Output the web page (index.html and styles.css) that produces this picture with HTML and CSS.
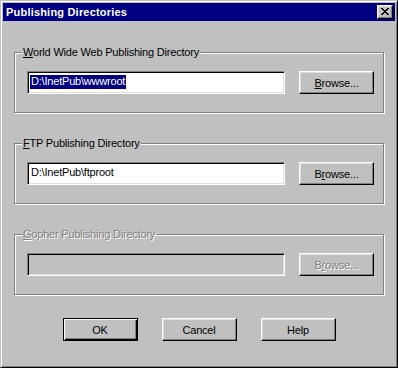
FILE: index.html
```html
<!DOCTYPE html>
<html lang="en">
<head>
  <meta charset="utf-8">
  <title>Publishing Directories</title>
  <link rel="stylesheet" href="styles.css">
</head>
<body>
  <div class="window">
    <div class="titlebar">
      <span class="title">Publishing Directories</span>
      <button class="close-btn" aria-label="Close">
        <svg width="8" height="7" viewBox="0 0 8 7" shape-rendering="crispEdges">
          <path d="M0 0h2v1H0z M6 0h2v1H6z M1 1h2v1H1z M5 1h2v1H5z M2 2h4v1H2z M3 3h2v1H3z M2 4h4v1H2z M1 5h2v1H1z M5 5h2v1H5z M0 6h2v1H0z M6 6h2v1H6z" fill="#000"/>
        </svg>
      </button>
    </div>

    <div class="client">
      <!-- WWW directory -->
      <div class="group">
        <span class="group-label"><u>W</u>orld Wide Web Publishing Directory</span>
        <div class="row">
          <div class="field"><span class="selected">D:\InetPub\wwwroot</span></div>
          <button class="btn"><u>B</u>rowse...</button>
        </div>
      </div>

      <!-- FTP directory -->
      <div class="group">
        <span class="group-label"><u>F</u>TP Publishing Directory</span>
        <div class="row">
          <div class="field"><span class="value">D:\InetPub\ftproot</span></div>
          <button class="btn">B<u>r</u>owse...</button>
        </div>
      </div>

      <!-- Gopher directory (disabled) -->
      <div class="group disabled">
        <span class="group-label"><u>G</u>opher Publishing Directory</span>
        <div class="row">
          <div class="field"></div>
          <button class="btn" disabled>B<u>r</u>owse...</button>
        </div>
      </div>

      <div class="actions">
        <button class="btn default">OK</button>
        <button class="btn">Cancel</button>
        <button class="btn">Help</button>
      </div>
    </div>
  </div>
</body>
</html>
```

FILE: styles.css
```css
body {
  margin: 0;
  background: #c0c0c0;
  font-family: "Liberation Sans", Arial, sans-serif;
  font-size: 11px;
  letter-spacing: -0.2px;
  color: #000;
}
.window {
  width: 398px;
  height: 368px;
  box-sizing: border-box;
  border: 1px solid;
  border-color: #c0c0c0 #000 #000 #c0c0c0;
  box-shadow: inset 1px 1px 0 #fff, inset -1px -1px 0 #808080;
  padding: 2px;
  background: #c0c0c0;
}
.titlebar {
  height: 18px;
  background: #000080;
  display: flex;
  align-items: center;
  justify-content: space-between;
  padding: 0 2px 0 3px;
}
.title {
  color: #fff;
  font-weight: bold;
  letter-spacing: 0.2px;
}
.close-btn {
  width: 16px;
  height: 14px;
  padding: 0 0 1px 0;
  box-sizing: border-box;
  display: flex;
  align-items: center;
  justify-content: center;
  background: #c0c0c0;
  border: 1px solid;
  border-color: #fff #000 #000 #fff;
  box-shadow: inset -1px -1px 0 #808080, inset 1px 1px 0 #dfdfdf;
}
.client {
  padding: 31px 11px 0;
}
.group {
  position: relative;
  height: 61px;
  box-sizing: border-box;
  border: 1px solid #808080;
  box-shadow: inset 1px 1px 0 #fff, 1px 1px 0 #fff;
  padding: 18px 0 0 12px;
}
.group + .group {
  margin-top: 30px;
}
.group-label {
  position: absolute;
  top: -7px;
  left: 7px;
  padding: 0 1px;
  line-height: 13px;
  background: #c0c0c0;
}
.row {
  display: flex;
  gap: 14px;
}
.field {
  width: 258px;
  height: 23px;
  box-sizing: border-box;
  border: 1px solid;
  border-color: #808080 #fff #fff #808080;
  box-shadow: inset 1px 1px 0 #000, inset -1px -1px 0 #dfdfdf;
  background: #fff;
  padding: 3px 2px 0;
  line-height: 13px;
  white-space: nowrap;
}
.selected {
  background: #000080;
  color: #fff;
  padding: 0 1px 2px;
}
.value {
  padding: 0 1px;
}
.btn {
  width: 75px;
  height: 23px;
  box-sizing: border-box;
  padding: 0;
  font: inherit;
  letter-spacing: inherit;
  color: #000;
  background: #c0c0c0;
  border: 1px solid;
  border-color: #fff #000 #000 #fff;
  box-shadow: inset -1px -1px 0 #808080, inset 1px 1px 0 #dfdfdf;
}
.btn.default {
  border-color: #000;
  box-shadow: inset 1px 1px 0 #fff, inset -1px -1px 0 #000, inset -2px -2px 0 #808080;
}
.btn:disabled {
  color: #808080;
  text-shadow: 1px 1px 0 #fff;
}
.disabled .group-label {
  color: #808080;
  text-shadow: 1px 1px 0 #fff;
}
.disabled .field {
  background: #c0c0c0;
}
.actions {
  display: flex;
  justify-content: center;
  gap: 24px;
  margin-top: 23px;
}
```
